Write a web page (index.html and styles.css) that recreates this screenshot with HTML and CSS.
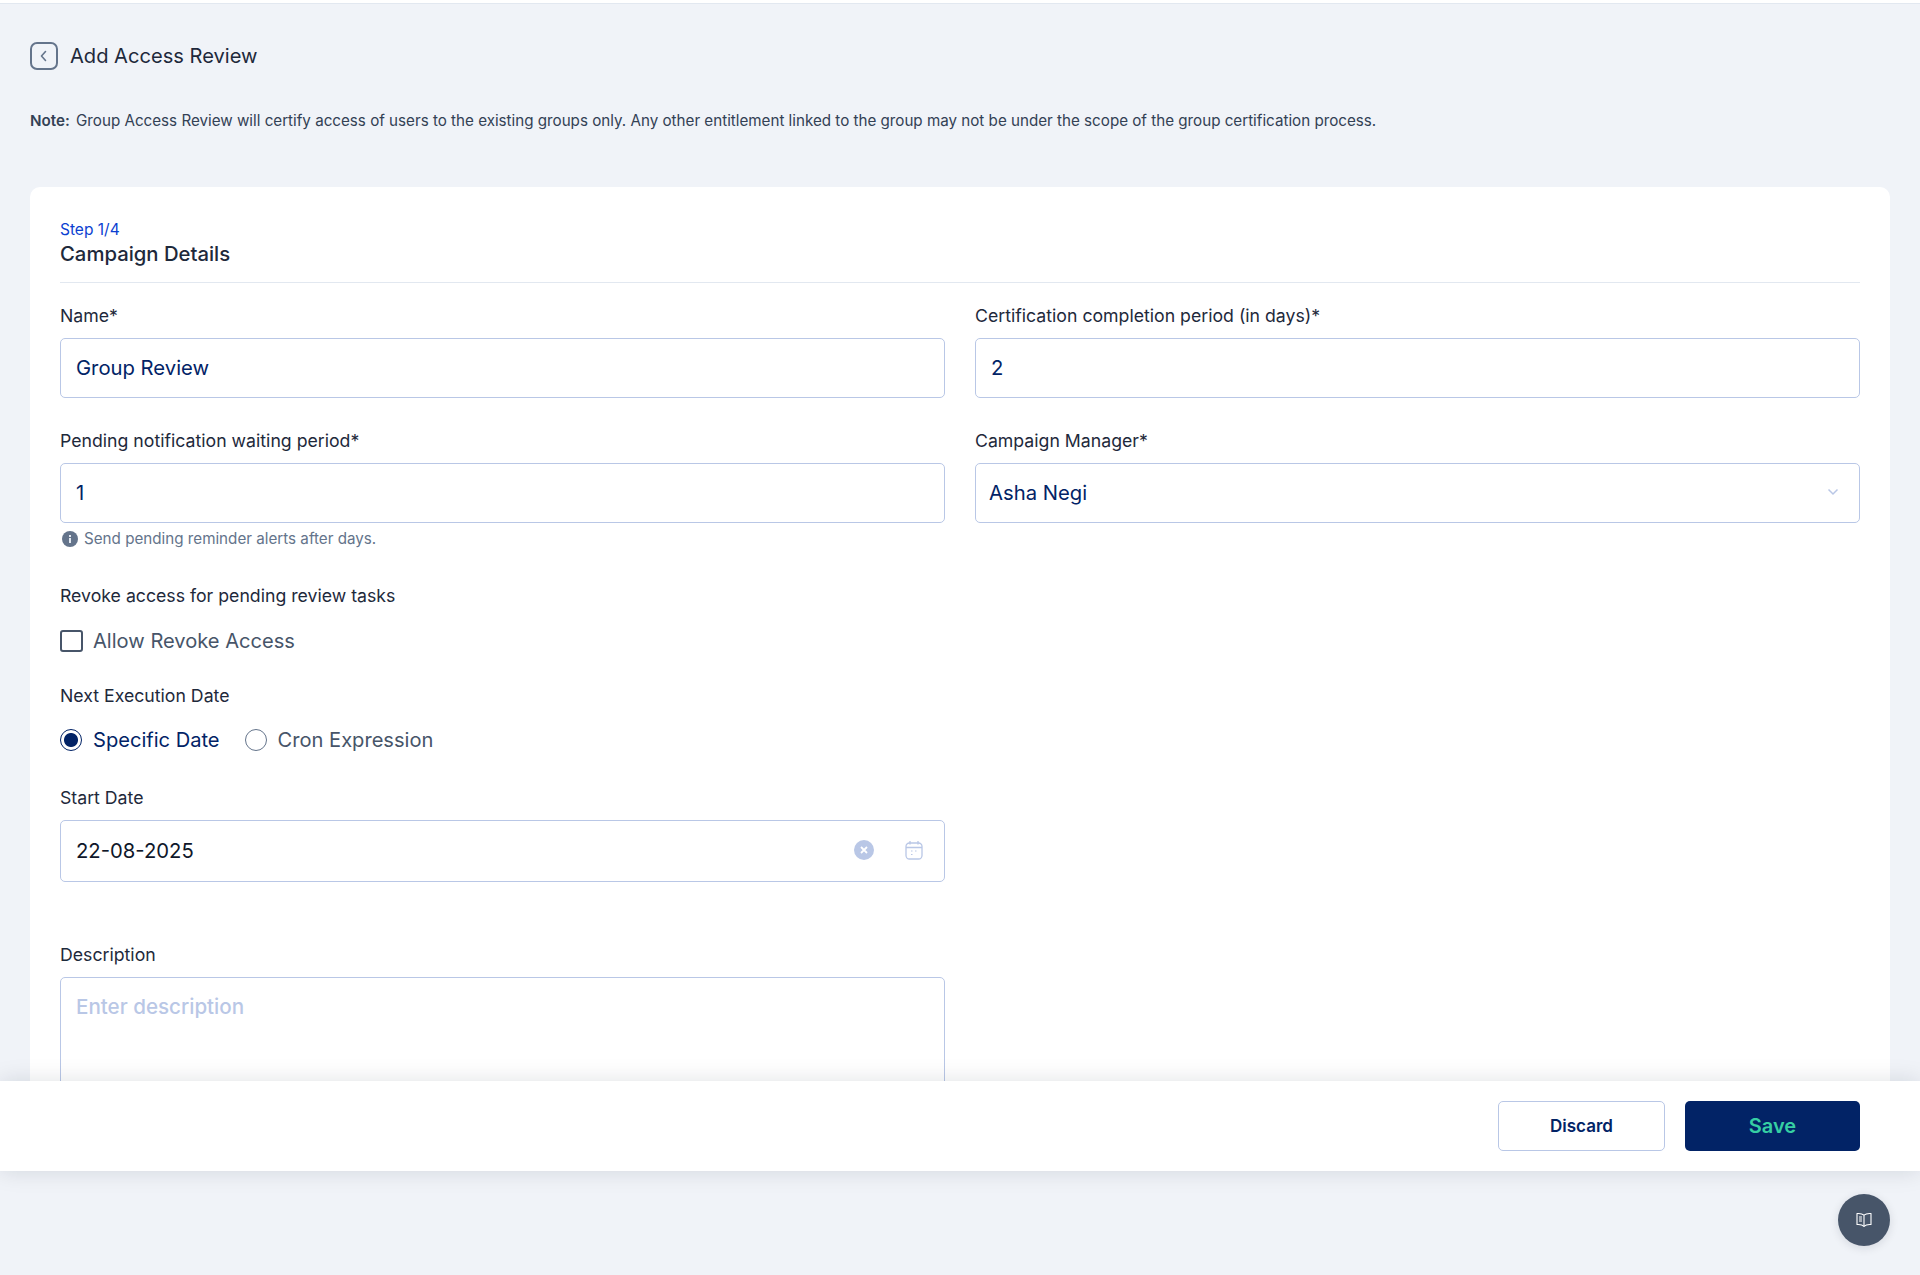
FILE: index.html
```html
<!DOCTYPE html>
<html lang="en">
<head>
    <meta charset="UTF-8">
    <title>Add Access Review</title>
    <link rel="stylesheet" href="styles.css">
</head>
<body>
    <div class="topbar"></div>
    <div class="main">
        <div class="title-row">
            <button class="back-btn">
                <svg width="14" height="14" viewBox="0 0 14 14" fill="none"><path d="M8.500 2.500 4.500 7l4 4.500" stroke="#64748b" stroke-width="1.600" stroke-linecap="round" stroke-linejoin="round"/></svg>
            </button>
            <h1>Add Access Review</h1>
        </div>
        <p class="note"><b>Note:</b> Group Access Review will certify access of users to the existing groups only. Any other entitlement linked to the group may not be under the scope of the group certification process.</p>

        <div class="card">
            <div class="step">Step 1/4</div>
            <h2>Campaign Details</h2>

            <div class="form-grid">
                <div class="form-group">
                    <label>Name*</label>
                    <div class="field">Group Review</div>
                </div>
                <div class="form-group">
                    <label>Certification completion period (in days)*</label>
                    <div class="field">2</div>
                </div>
                <div class="form-group">
                    <label>Pending notification waiting period*</label>
                    <div class="field">1</div>
                    <div class="hint">
                        <svg width="16" height="16" viewBox="0 0 16 16"><circle cx="8" cy="8" r="8" fill="#64748b"/><rect x="7" y="7" width="2" height="5" fill="#e2e8f0"/><rect x="7" y="4" width="2" height="2" fill="#e2e8f0"/></svg>
                        <span>Send pending reminder alerts after days.</span>
                    </div>
                </div>
                <div class="form-group">
                    <label>Campaign Manager*</label>
                    <div class="field select">
                        <span>Asha Negi</span>
                        <svg width="12" height="8" viewBox="0 0 12 8" fill="none"><path d="M1.500 1.500 6 6l4.500-4.500" stroke="#b9c7e6" stroke-width="1.500"/></svg>
                    </div>
                </div>
            </div>

            <div class="half">
                <label class="revoke-label">Revoke access for pending review tasks</label>
                <div class="option-row">
                    <span class="checkbox"></span>
                    <span class="option-text">Allow Revoke Access</span>
                </div>

                <label class="exec-label">Next Execution Date</label>
                <div class="option-row radios">
                    <span class="radio checked"></span>
                    <span class="option-text selected">Specific Date</span>
                    <span class="radio second"></span>
                    <span class="option-text">Cron Expression</span>
                </div>

                <label class="start-label">Start Date</label>
                <div class="field date">
                    <span>22-08-2025</span>
                    <div class="date-icons">
                        <svg width="20" height="20" viewBox="0 0 20 20"><circle cx="10" cy="10" r="10" fill="#b9c7e6"/><path d="M7 7l6 6M13 7l-6 6" stroke="#fff" stroke-width="1.800"/></svg>
                        <svg width="18" height="20" viewBox="0 0 18 20" fill="none" stroke="#b9c7e6" stroke-width="1.300"><rect x="1" y="3" width="16" height="16" rx="3.500"/><path d="M1 7.500h16M5 1v3.500M13 1v3.500"/><path d="M6 11h1.500M10 11h1.500M6 14.500h1.500" stroke-width="1.200"/></svg>
                    </div>
                </div>

                <label class="desc-label">Description</label>
                <div class="field textarea">Enter description</div>
            </div>
        </div>
    </div>

    <div class="footer">
        <button class="discard-btn">Discard</button>
        <button class="save-btn">Save</button>
    </div>

    <button class="help-btn">
        <svg width="18" height="18" viewBox="0 0 18 18" fill="none" stroke="#fff" stroke-width="1.100" stroke-linejoin="round"><path d="M9 4.200C7.500 2.800 4.500 2.300 2 2.500v11c2.500-.2 5.500.3 7 1.800 1.500-1.500 4.500-2 7-1.800v-11c-2.500-.2-5.500.3-7 1.700Z"/><path d="M9 4.200v11.100"/><path d="M4 6h3M4 8h3M4 10h3" stroke-width="1"/></svg>
    </button>
</body>
</html>
```

FILE: styles.css
```css
* {
    box-sizing: border-box;
}
html, body {
    margin: 0;
    padding: 0;
}
body {
    position: relative;
    height: 1275px;
    overflow: hidden;
    background-color: #f0f3f8;
    font-family: Inter, "Liberation Sans", sans-serif;
    color: #1e293b;
}
.topbar {
    height: 4px;
    background-color: #fff;
    border-bottom: 1px solid #e2e8f0;
}
.main {
    height: 1077px;
    overflow: hidden;
    padding: 0 30px;
}
.title-row {
    display: flex;
    align-items: center;
    gap: 12px;
    padding-top: 38px;
}
.back-btn {
    display: flex;
    align-items: center;
    justify-content: center;
    width: 28px;
    height: 28px;
    padding: 0;
    background: none;
    border: 2px solid #64748b;
    border-radius: 7px;
}
h1 {
    margin: 0;
    font-size: 20.100px;
    font-weight: 400;
    line-height: 28px;
    color: #1e293b;
}
.note {
    margin: 41px 0 0;
    font-size: 15.180px;
    line-height: 20px;
    color: #334155;
}
.note b {
    font-weight: 600;
    margin-right: 2px;
}
.card {
    height: 960px;
    margin-top: 56px;
    padding: 33px 30px 0;
    background-color: #fff;
    border-radius: 10px 10px 0 0;
}
.step {
    font-size: 15.500px;
    line-height: 20px;
    color: #0b3fd1;
}
h2 {
    margin: 0;
    padding-bottom: 14px;
    font-size: 20.300px;
    font-weight: 500;
    line-height: 28px;
    color: #1e293b;
    border-bottom: 1px solid #e2e8f0;
}
.form-grid {
    display: grid;
    grid-template-columns: 1fr 1fr;
    column-gap: 30px;
    row-gap: 31px;
    margin-top: 21px;
}
label {
    display: block;
    font-size: 17.700px;
    line-height: 24px;
    color: #1e293b;
}
.field {
    display: flex;
    align-items: center;
    height: 60px;
    margin-top: 10px;
    padding: 0 15px 2px;
    font-size: 20.250px;
    font-weight: 400;
    color: #022366;
    background-color: #fff;
    border: 1px solid #b9c7e6;
    border-radius: 5px;
}
.select {
    justify-content: space-between;
    padding-left: 13px;
    padding-right: 20px;
}
.hint {
    display: flex;
    align-items: center;
    gap: 6px;
    margin-top: 6px;
    padding-left: 2px;
    font-size: 15.200px;
    line-height: 20px;
    color: #64748b;
}
.half {
    width: 885px;
}
.revoke-label {
    margin-top: 35px;
}
.option-row {
    display: flex;
    align-items: center;
    height: 32px;
    margin-top: 17px;
    font-size: 20.100px;
    color: #475569;
}
.option-row.radios {
    margin-top: 16px;
}
.checkbox {
    width: 23px;
    height: 22px;
    margin-right: 10px;
    border: 2px solid #475569;
    border-radius: 3px;
}
.radio {
    width: 22px;
    height: 22px;
    margin-right: 11px;
    border: 1.500px solid #64748b;
    border-radius: 50%;
}
.radio.checked {
    border: 1.500px solid #022366;
    background: radial-gradient(circle, #022366 0 6.500px, #fff 7.500px);
}
.radio.second {
    margin-left: 25px;
}
.selected {
    color: #022366;
}
.exec-label {
    margin-top: 27px;
}
.start-label {
    margin-top: 30px;
}
.date {
    justify-content: space-between;
    height: 62px;
    margin-top: 10px;
    color: #0f172a;
}
.date-icons {
    display: flex;
    align-items: center;
    gap: 31px;
    padding-right: 6px;
}
.desc-label {
    margin-top: 61px;
}
.textarea {
    align-items: flex-start;
    height: 200px;
    margin-top: 10px;
    padding-top: 15px;
    font-size: 20.600px;
    font-weight: 500;
    color: #b9c7e6;
    line-height: 28px;
}
.footer {
    position: relative;
    display: flex;
    justify-content: flex-end;
    align-items: center;
    gap: 20px;
    height: 90px;
    padding-right: 60px;
    background-color: #fff;
    box-shadow: 0 0 22px rgba(15, 23, 42, 0.13);
}
.footer button {
    height: 50px;
    border-radius: 5px;
    font-family: inherit;
    font-weight: 600;
}
.discard-btn {
    width: 167px;
    font-size: 17px;
    color: #022366;
    background-color: #fff;
    border: 1px solid #b9c7e6;
}
.save-btn {
    width: 175px;
    font-size: 20px;
    color: #36cfa3;
    background-color: #022366;
    border: none;
}
.help-btn {
    position: absolute;
    right: 30px;
    bottom: 29px;
    display: flex;
    align-items: center;
    justify-content: center;
    width: 52px;
    height: 52px;
    padding: 0 1px 0 0;
    background-color: #475569;
    border: none;
    border-radius: 50%;
    box-shadow: 0 2px 10px rgba(15, 23, 42, 0.12);
}
```
